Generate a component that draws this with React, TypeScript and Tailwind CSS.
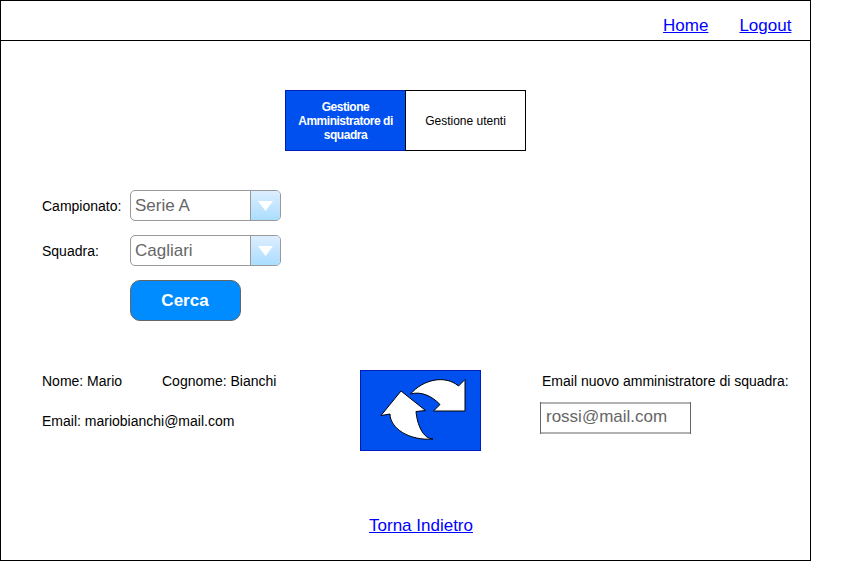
import React from "react";

function NavLink({ children }: { children: React.ReactNode }) {
  return (
    <a href="#" className="text-[17px] leading-5 text-[#0000ff] underline">
      {children}
    </a>
  );
}

function Select({ value }: { value: string }) {
  return (
    <button
      type="button"
      className="flex h-[31px] w-[151px] overflow-hidden rounded-[5px] border border-[#999999] bg-white text-left"
    >
      <span className="flex-1 pl-1 text-[17px] leading-[29px] text-[#666666]">{value}</span>
      <span className="flex h-full w-[30px] items-center justify-center border-l border-[#999999] bg-linear-to-b from-[#ddeeff] to-[#aaddff]">
        <svg width="15" height="10" viewBox="0 0 15 10" fill="#ffffff">
          <path d="M0 0H15L7.5 10Z" />
        </svg>
      </span>
    </button>
  );
}

function SwapArrows() {
  return (
    <svg
      width="119"
      height="79"
      viewBox="0 0 119 79"
      fill="#ffffff"
      stroke="#000000"
      strokeWidth="1"
      strokeMiterlimit="10"
    >
      <path d="M49.5 23C62 8.500 84 3.500 97.500 15L104 8.500V40H72.500L79 33.500C71 25 60 20 49.500 23Z" />
      <path d="M40 20L64.500 39.500L55 40.500C56 53 62 68 72 68C48 70 29 57 29 43L20 44.500Z" />
    </svg>
  );
}

export default function App() {
  return (
    <div className="min-h-[561px] bg-white font-['Liberation_Sans',Arial,sans-serif] text-sm text-black">
      <div className="flex h-[561px] w-[811px] flex-col border border-black">
        <header className="flex h-10 shrink-0 justify-end gap-[31px] border-b border-black pt-[15px] pr-[18.6px]">
          <NavLink>Home</NavLink>
          <NavLink>Logout</NavLink>
        </header>

        <nav className="mt-[49px] flex h-[61px] justify-center text-xs leading-[14px]">
          <button
            type="button"
            className="w-[120px] border border-r-0 border-[#001dbc] bg-[#0050ef] px-2 font-bold tracking-[-0.48px] text-white"
          >
            Gestione Amministratore di squadra
          </button>
          <button type="button" className="w-[121px] border border-black bg-white">
            Gestione utenti
          </button>
        </nav>

        <form className="mt-[39px] ml-[41px] grid w-[240px] grid-cols-[88px_151px] gap-y-[14px]">
          <label className="h-[31px] leading-[33px]">Campionato:</label>
          <Select value="Serie A" />
          <label className="h-[31px] leading-[33px]">Squadra:</label>
          <Select value="Cagliari" />
          <button
            type="button"
            className="col-start-2 h-[41px] w-[111px] rounded-[10px] border border-[#666666] bg-[#008cff] pt-0.5 pr-px text-[17px] font-bold text-white"
          >
            Cerca
          </button>
        </form>

        <section className="mt-[49px] flex h-[81px] pl-[41px]">
          <div className="w-[318px] pt-px">
            <div className="flex h-10 leading-5">
              <span className="w-[120px]">Nome: Mario</span>
              <span>Cognome: Bianchi</span>
            </div>
            <p className="leading-5">Email: mariobianchi@mail.com</p>
          </div>
          <button type="button" className="h-[81px] w-[121px] border border-[#001dbc] bg-[#0050ef]">
            <SwapArrows />
          </button>
          <div className="ml-[59px] pt-px">
            <label className="ml-0.5 block leading-5">Email nuovo amministratore di squadra:</label>
            <div className="mt-[11px] h-8 w-[151px] border-x border-[#666666]">
              <input
                type="text"
                defaultValue="rossi@mail.com"
                className="block h-8 w-full border-y-2 border-[#b2b2b2] bg-white px-[5px] pb-0.5 text-[17px] text-[#666666]"
              />
            </div>
          </div>
        </section>

        <footer className="mt-[65px] pl-[31px] text-center">
          <NavLink>Torna Indietro</NavLink>
        </footer>
      </div>
    </div>
  );
}
